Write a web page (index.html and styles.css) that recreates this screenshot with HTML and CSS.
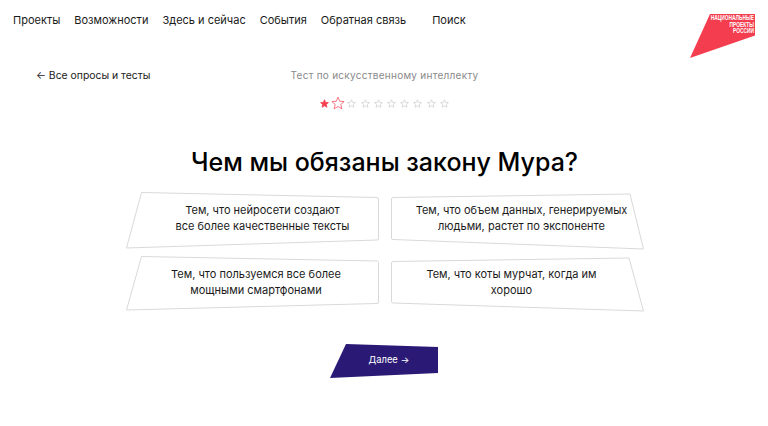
FILE: index.html
```html
<!DOCTYPE html>
<html lang="ru">
  <head>
    <meta charset="UTF-8" />
    <meta name="viewport" content="width=device-width, initial-scale=1.0" />
    <title>Тест по искусственному интеллекту</title>
    <link rel="stylesheet" href="styles.css">
  </head>
  <body>
    <header class="site-header">
      <nav class="main-nav">
        <a href="#">Проекты</a>
        <a href="#">Возможности</a>
        <a href="#">Здесь и сейчас</a>
        <a href="#">События</a>
        <a href="#">Обратная связь</a>
        <a href="#" class="search-link">Поиск</a>
      </nav>
      <div class="logo">
        <div class="logo-text">НАЦИОНАЛЬНЫЕ<br>ПРОЕКТЫ<br>РОССИИ</div>
      </div>
    </header>

    <div class="intro-row">
      <a href="#" class="back-link">← Все опросы и тесты</a>
      <div class="test-name">Тест по искусственному интеллекту</div>
    </div>

    <div class="stars">
      <svg class="star star-done" viewBox="0 0 24 24"><polygon points="12,2 15,9 22.5,9.6 16.8,14.5 18.6,22 12,18 5.4,22 7.2,14.5 1.5,9.6 9,9" /></svg>
      <svg class="star star-current" viewBox="0 0 24 24"><polygon points="12,2 15,9 22.5,9.6 16.8,14.5 18.6,22 12,18 5.4,22 7.2,14.5 1.5,9.6 9,9" /></svg>
      <svg class="star" viewBox="0 0 24 24"><polygon points="12,2 15,9 22.5,9.6 16.8,14.5 18.6,22 12,18 5.4,22 7.2,14.5 1.5,9.6 9,9" /></svg>
      <svg class="star" viewBox="0 0 24 24"><polygon points="12,2 15,9 22.5,9.6 16.8,14.5 18.6,22 12,18 5.4,22 7.2,14.5 1.5,9.6 9,9" /></svg>
      <svg class="star" viewBox="0 0 24 24"><polygon points="12,2 15,9 22.5,9.6 16.8,14.5 18.6,22 12,18 5.4,22 7.2,14.5 1.5,9.6 9,9" /></svg>
      <svg class="star" viewBox="0 0 24 24"><polygon points="12,2 15,9 22.5,9.6 16.8,14.5 18.6,22 12,18 5.4,22 7.2,14.5 1.5,9.6 9,9" /></svg>
      <svg class="star" viewBox="0 0 24 24"><polygon points="12,2 15,9 22.5,9.6 16.8,14.5 18.6,22 12,18 5.4,22 7.2,14.5 1.5,9.6 9,9" /></svg>
      <svg class="star" viewBox="0 0 24 24"><polygon points="12,2 15,9 22.5,9.6 16.8,14.5 18.6,22 12,18 5.4,22 7.2,14.5 1.5,9.6 9,9" /></svg>
      <svg class="star" viewBox="0 0 24 24"><polygon points="12,2 15,9 22.5,9.6 16.8,14.5 18.6,22 12,18 5.4,22 7.2,14.5 1.5,9.6 9,9" /></svg>
      <svg class="star" viewBox="0 0 24 24"><polygon points="12,2 15,9 22.5,9.6 16.8,14.5 18.6,22 12,18 5.4,22 7.2,14.5 1.5,9.6 9,9" /></svg>
    </div>

    <h1 class="question">Чем мы обязаны закону Мура?</h1>

    <div class="answers">
      <div class="answer answer-a">
        <svg class="answer-shape" viewBox="0 0 253 56"><path d="M15.5 .5 L251 5.5 Q252.5 5.5 252.5 7 V47 Q252.5 48 251 48 L.5 56 Z" /></svg>
        <span>Тем, что нейросети создают<br>все более качественные тексты</span>
      </div>
      <div class="answer answer-b">
        <svg class="answer-shape" viewBox="0 0 253 56"><path d="M2 5.5 L239 2 L252.5 57 L2 47.5 Q.5 47.5 .5 46 V7 Q.5 5.5 2 5.5 Z" /></svg>
        <span>Тем, что объем данных, генерируемых<br>людьми, растет по экспоненте</span>
      </div>
      <div class="answer answer-c">
        <svg class="answer-shape" viewBox="0 0 253 56"><path d="M15.5 .5 L251 5 Q252.5 5 252.5 6.5 V46 Q252.5 47.5 251 47.5 L.5 54 Z" /></svg>
        <span>Тем, что пользуемся все более<br>мощными смартфонами</span>
      </div>
      <div class="answer answer-d">
        <svg class="answer-shape" viewBox="0 0 253 56"><path d="M2 5.5 L238 2 L252.5 55 L2 47 Q.5 47 .5 45.5 V7 Q.5 5.5 2 5.5 Z" /></svg>
        <span>Тем, что коты мурчат, когда им<br>хорошо</span>
      </div>
    </div>

    <div class="next-row">
      <button class="next-btn">Далее →</button>
    </div>
  </body>
</html>
```

FILE: styles.css
```css
body {
  font-family: Inter, "Noto Sans", sans-serif;
  background-color: #ffffff;
  color: #1a1a1a;
  margin: 0;
  height: 426px;
  overflow: hidden;
}
a {
  color: inherit;
  text-decoration: none;
}
.site-header {
  display: flex;
  justify-content: space-between;
  align-items: flex-start;
  padding: 14px 13px 0 13px;
}
.main-nav {
  display: flex;
  gap: 14px;
  font-size: 11px;
  line-height: 12px;
}
.search-link {
  margin-left: 12px;
}
.logo {
  display: flex;
  justify-content: flex-end;
  width: 65px;
  height: 44px;
  background-color: #f43e50;
  clip-path: polygon(20px 0, 65px 0, 65px 21.5px, 0 44px);
}
.logo-text {
  height: 22px;
  padding: 1px 1px 0 0;
  font-family: "Liberation Sans", sans-serif;
  font-size: 6.8px;
  font-weight: 700;
  line-height: 6.6px;
  color: #ffffff;
  text-align: right;
  transform: scaleX(0.71);
  transform-origin: right top;
}
.intro-row {
  display: grid;
  grid-template-columns: 1fr auto 1fr;
  margin-top: 10px;
  padding: 0 35px 0 36px;
  align-items: center;
  height: 14px;
}
.back-link {
  font-size: 10.4px;
}
.test-name {
  grid-column: 2;
  font-size: 10px;
  color: #8a8a8a;
  letter-spacing: 0.27px;
}
.stars {
  display: flex;
  justify-content: center;
  align-items: center;
  height: 14px;
  margin-top: 14px;
  padding-left: 1px;
}
.star {
  width: 9px;
  height: 9px;
  margin: 0 2.1px;
  fill: none;
  stroke: #cfcfcf;
  stroke-width: 2;
}
.star-done {
  fill: #f43e50;
  stroke: #f43e50;
}
.star-current {
  width: 14px;
  height: 14px;
  margin: 0;
  stroke: #f43e50;
  stroke-width: 1.2;
}
.question {
  margin: 35px 0 0 0;
  font-size: 25px;
  line-height: 34px;
  font-weight: 500;
  color: #000000;
  text-align: center;
  padding-left: 1px;
}
.answers {
  display: grid;
  grid-template-columns: 253px 253px;
  grid-auto-rows: 56px;
  gap: 8px 12px;
  justify-content: center;
  margin-top: 13px;
  padding-left: 2px;
}
.answer {
  position: relative;
  display: flex;
  align-items: center;
  justify-content: center;
  font-size: 11px;
  line-height: 16px;
  text-align: center;
}
.answer span {
  position: relative;
}
.answer-a {
  padding-left: 20px;
  padding-bottom: 4px;
}
.answer-b {
  padding-left: 8px;
  padding-bottom: 4px;
}
.answer-c {
  padding-left: 7px;
  padding-bottom: 4px;
}
.answer-d {
  padding-right: 12px;
  box-sizing: border-box;
  padding-bottom: 4px;
}
.answer-shape {
  position: absolute;
  inset: 0;
  width: 100%;
  height: 100%;
  overflow: visible;
  fill: #ffffff;
  stroke: #d9d9d9;
  stroke-width: 1;
}
.next-row {
  display: flex;
  justify-content: center;
  margin-top: 32px;
}
.next-btn {
  width: 108px;
  height: 34px;
  padding: 0 0 4px 10px;
  border: none;
  background-color: #2a1a75;
  color: #ffffff;
  font-family: inherit;
  font-size: 9.4px;
  clip-path: polygon(16px 0, 108px 3px, 108px 29px, 0 34px);
  cursor: pointer;
}
```
